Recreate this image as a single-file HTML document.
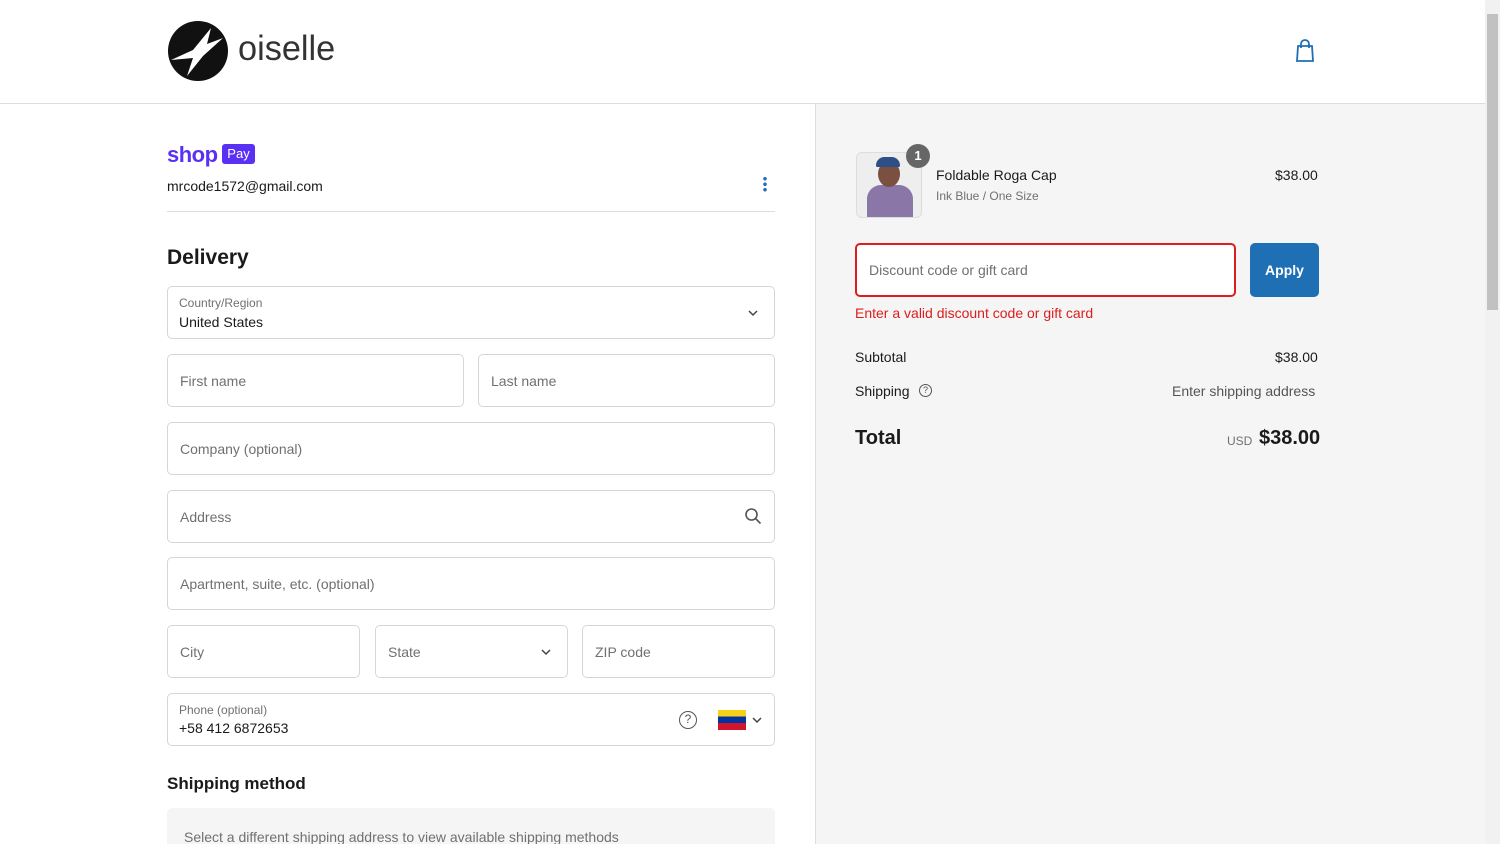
<!DOCTYPE html>
<html style="height:844px;overflow:hidden"><head><meta charset="utf-8"><style>
*{box-sizing:border-box;margin:0;padding:0}
body{width:1500px;height:844px;overflow:hidden;font-family:"Liberation Sans",sans-serif;color:#1a1a1a;background:#fff;position:relative;font-size:14px}
.hdr{position:absolute;left:0;top:0;width:1485px;height:104px;border-bottom:1px solid #ddd;background:#fff}
.right{position:absolute;left:815px;top:104px;width:670px;height:740px;background:#f5f5f5;border-left:1px solid #ddd}
.sb{position:absolute;left:1485px;top:0;width:15px;height:844px;background:#f1f1f1}
.sb div{position:absolute;left:2px;top:14px;width:11px;height:296px;background:#c1c1c1}
.f{position:absolute;border:1px solid #d6d6d6;border-radius:5px;background:#fff;color:#707070;font-size:14px;padding-left:12px;display:flex;align-items:center}
.lbl{position:absolute;font-size:12px;color:#707070}
.val{position:absolute;font-size:14px;color:#1a1a1a}
.a{position:absolute}
</style></head><body>
<div class="hdr">
<svg class="a" style="left:167px;top:20px" width="62" height="62" viewBox="0 0 62 62"><circle cx="31" cy="31" r="30" fill="#111"/><path d="M4 40 L26 30 L44 8 L40 24 L56 18 L36 36 L20 56 L26 38 Z" fill="#fff"/></svg>
<div class="a" style="left:238px;top:29px;font-size:35px;color:#333;transform:scaleX(0.98);transform-origin:left">oiselle</div>
<svg class="a" style="left:1295px;top:39px" width="20" height="24" viewBox="0 0 20 24" fill="none" stroke="#1f6fb5" stroke-width="1.8"><path d="M3 7h14l1 15H2z"/><path d="M6 9V5a4 4 0 0 1 8 0v4"/></svg>
</div>
<div class="a" style="left:167px;top:142px;font-size:22px;font-weight:bold;color:#5a31f4;letter-spacing:-0.5px">shop</div>
<div class="a" style="left:222px;top:144px;width:33px;height:20px;background:#5a31f4;border-radius:3px;color:#fff;font-size:13px;text-align:center;line-height:20px">Pay</div>
<div class="a" style="left:167px;top:178px;font-size:14px">mrcode1572@gmail.com</div>
<div class="a" style="left:763px;top:176px;width:4px;height:16px;background:radial-gradient(circle,#1f6fb5 1.6px,transparent 2px) 0 0/4px 5.5px"></div>
<div class="a" style="left:167px;top:211px;width:608px;height:1px;background:#ddd"></div>
<div class="a" style="left:167px;top:246px;font-size:21px;font-weight:bold">Delivery</div>
<div class="f" style="left:167px;top:286px;width:608px;height:53px"></div>
<div class="lbl" style="left:179px;top:296px">Country/Region</div><div class="val" style="left:179px;top:314px">United States</div>
<svg class="a" style="left:747px;top:309px" width="12" height="8"><path d="M2 2l4 4 4-4" stroke="#444" fill="none" stroke-width="1.5"/></svg>
<div class="f" style="left:167px;top:354px;width:297px;height:53px">First name</div>
<div class="f" style="left:478px;top:354px;width:297px;height:53px">Last name</div>
<div class="f" style="left:167px;top:422px;width:608px;height:53px">Company (optional)</div>
<div class="f" style="left:167px;top:490px;width:608px;height:53px">Address</div>
<svg class="a" style="left:744px;top:507px" width="18" height="18" fill="none" stroke="#555" stroke-width="1.6"><circle cx="7.5" cy="7.5" r="5.5"/><path d="M11.5 11.5l5 5"/></svg>
<div class="f" style="left:167px;top:557px;width:608px;height:53px">Apartment, suite, etc. (optional)</div>
<div class="f" style="left:167px;top:625px;width:193px;height:53px">City</div>
<div class="f" style="left:375px;top:625px;width:193px;height:53px">State</div>
<svg class="a" style="left:540px;top:648px" width="12" height="8"><path d="M2 2l4 4 4-4" stroke="#444" fill="none" stroke-width="1.5"/></svg>
<div class="f" style="left:582px;top:625px;width:193px;height:53px">ZIP code</div>
<div class="f" style="left:167px;top:693px;width:608px;height:53px"></div>
<div class="lbl" style="left:179px;top:703px">Phone (optional)</div><div class="val" style="left:179px;top:720px">+58 412 6872653</div>
<div class="a" style="left:679px;top:711px;width:18px;height:18px;border:1.5px solid #555;border-radius:50%;font-size:12px;text-align:center;line-height:15px;color:#555">?</div>
<div class="a" style="left:718px;top:710px;width:28px;height:20px;background:linear-gradient(#f7d117 33%,#0033a0 33% 66%,#cf142b 66%)"></div>
<svg class="a" style="left:751px;top:716px" width="12" height="8"><path d="M2 2l4 4 4-4" stroke="#444" fill="none" stroke-width="1.5"/></svg>
<div class="a" style="left:167px;top:774px;font-size:17px;font-weight:bold">Shipping method</div>
<div class="a" style="left:167px;top:808px;width:608px;height:36px;overflow:hidden;background:#f5f5f5;border-radius:5px 5px 0 0;color:#707070;padding:21px 0 0 17px">Select a different shipping address to view available shipping methods</div>
<div class="right">
<div class="a" style="left:40px;top:48px;width:66px;height:66px;border:1px solid #ddd;border-radius:6px;background:#eee;overflow:hidden"><div class="a" style="left:10px;top:32px;width:46px;height:34px;background:#8a77a8;border-radius:14px 14px 0 0"></div><div class="a" style="left:21px;top:8px;width:22px;height:26px;background:#7a5040;border-radius:50%"></div><div class="a" style="left:19px;top:4px;width:24px;height:10px;background:#2e4f85;border-radius:10px 10px 2px 2px"></div></div>
<div class="a" style="left:90px;top:40px;width:24px;height:24px;border-radius:50%;background:#666;color:#fff;font-size:13px;text-align:center;line-height:24px;font-weight:bold">1</div>
<div class="a" style="left:120px;top:63px;font-size:14px">Foldable Roga Cap</div>
<div class="a" style="left:120px;top:85px;font-size:12px;color:#707070">Ink Blue / One Size</div>
<div class="a" style="left:459px;top:63px;font-size:14px">$38.00</div>
<div class="a" style="left:39px;top:139px;width:381px;height:54px;border:2px solid #dd1d1d;border-radius:5px;background:#fff;color:#707070;padding:17px 0 0 12px">Discount code or gift card</div>
<div class="a" style="left:434px;top:139px;width:69px;height:54px;background:#1f6fb5;border-radius:5px;color:#fff;font-weight:bold;text-align:center;line-height:54px">Apply</div>
<div class="a" style="left:39px;top:201px;color:#dd1d1d;font-size:14px">Enter a valid discount code or gift card</div>
<div class="a" style="left:39px;top:245px">Subtotal</div><div class="a" style="left:459px;top:245px">$38.00</div>
<div class="a" style="left:39px;top:279px">Shipping</div>
<div class="a" style="left:103px;top:280px;width:13px;height:13px;border:1.2px solid #555;border-radius:50%;font-size:9px;text-align:center;line-height:11px;color:#555">?</div>
<div class="a" style="left:356px;top:279px;color:#555">Enter shipping address</div>
<div class="a" style="left:39px;top:323px;font-size:20px;font-weight:bold">Total</div>
<div class="a" style="left:411px;top:330px;font-size:12px;color:#707070">USD</div>
<div class="a" style="left:443px;top:323px;font-size:20px;font-weight:bold">$38.00</div>
</div>
<div class="sb"><div></div></div>
</body></html>
